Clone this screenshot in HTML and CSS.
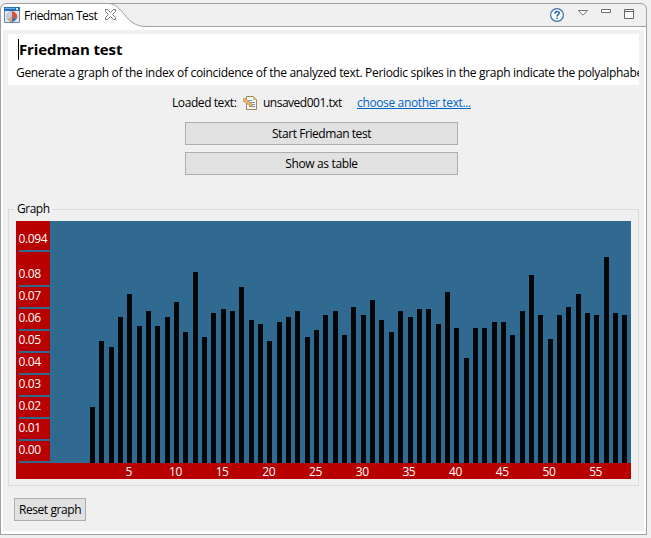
FILE: index.html
```html
<!DOCTYPE html>
<html lang="en">
<head>
<meta charset="utf-8">
<title>Friedman Test</title>
<link rel="stylesheet" href="styles.css">
</head>
<body>
<div class="view">
  <header class="tabbar">
    <svg class="tab-shape" width="647" height="30" viewBox="0 0 647 30">
      <path d="M.5 30V9C.5 6 3 3.500 6 3.500H108C124 3.500 124 26.500 146 26.500H647V30Z" fill="#fff"/>
      <path d="M.5 30V9C.5 6 3 3.500 6 3.500H641C644 3.500 646.500 6 646.500 9V30M108 3.500C124 3.500 124 26.500 146 26.500H646" fill="none" stroke="#a0a0a0"/>
    </svg>
    <svg class="tab-icon" width="16" height="16" viewBox="0 0 16 16">
      <path d="M.5.500h15v15H.5z" fill="#e4e9ee" stroke="#6483a6"/>
      <path d="M0 0h16v4H0z" fill="#286eb4"/><path d="M1 1h10v1H1z" fill="#69aeea"/><path d="M12 1h2v2h-2z" fill="#d8e9f7"/>
      <circle cx="8" cy="9.500" r="5" fill="#e8a860" stroke="#9c9ba6"/>
      <path d="M8 9.500V4.500A5 5 0 0 0 3.700 12z" fill="#c3cfe6"/>
      <path d="M8 9.500V4.500a5 5 0 0 1 4 8z" fill="#d8523b"/>
      <path d="M8 9.500l4 3a5 5 0 0 1-4 2z" fill="#3277bd"/>
    </svg>
    <span class="tab-title">Friedman Test</span>
    <svg class="tab-close" width="11" height="11" viewBox="0 0 11 11"><path d="M.5.500h2l3 3 3-3h2v2l-3 3 3 3v2h-2l-3-3-3 3h-2v-2l3-3-3-3z" fill="#fff" stroke="#777"/></svg>
    <svg class="tools" width="84" height="16" viewBox="0 0 84 16">
      <circle cx="7" cy="8" r="6.400" fill="#fff" stroke="#3671aa" stroke-width="1.200"/>
      <path d="M5 6.600c0-2.800 4.200-2.800 4.200-.5 0 1.600-2.100 1.500-2.100 3.400M7.100 10.400v1.700" fill="none" stroke="#2869aa" stroke-width="1.600"/>
      <path d="M28.300 3.500h9.400l-4.700 4.700z" fill="#fff" stroke="#707070"/>
      <path d="M51.500 2.500h9v3h-9z" fill="#fff" stroke="#707070"/>
      <path d="M74.500 2.500h9v9h-9zM74.500 4.500h9" fill="#fff" stroke="#666"/>
    </svg>
  </header>
  <main class="content">
    <section class="banner">
      <h1 class="title">Friedman test</h1>
      <p class="description">Generate a graph of the index of coincidence of the analyzed text. Periodic spikes in the graph indicate the polyalphabe</p>
    </section>
    <div class="source">
      <span class="source-label">Loaded text:</span>
      <svg class="file-icon" width="14" height="14" viewBox="0 0 14 14">
        <path d="M3.500.500h7l3 3v10h-10z" fill="#f7faff" stroke="#a18a52"/>
        <path d="M10 0v4h4z" fill="#d8bd78"/>
        <path d="M5 4.500h4M7 6.500h5M8 8.500h4M6 10.500h6" stroke="#7894be"/>
        <path d="M0 3l2-1 7 6 1 3-3-1-7-5z" fill="#e9b665" stroke="#b18750" stroke-width=".6"/>
      </svg>
      <span class="file-name">unsaved001.txt</span>
      <a class="choose">choose another text...</a>
    </div>
    <div class="actions">
      <button class="button start">Start Friedman test</button>
      <button class="button">Show as table</button>
    </div>
    <fieldset class="group">
      <legend class="legend">Graph</legend>
      <div class="chart">
        <div class="y-axis">
          <div class="tick first">0.094</div><div class="tick second">0.08</div><div class="tick">0.07</div><div class="tick">0.06</div><div class="tick">0.05</div><div class="tick">0.04</div><div class="tick">0.03</div><div class="tick">0.02</div><div class="tick">0.01</div><div class="tick">0.00</div>
        </div>
        <div class="plot" id="plot"></div>
        <div class="x-axis" id="x-axis"></div>
      </div>
    </fieldset>
    <button class="button reset">Reset graph</button>
  </main>
</div>
<script src="chart.js"></script>
</body>
</html>
```
FILE: styles.css
```css
* { box-sizing: border-box; }
body { margin: 0; background: #f0f0f0; color: #000; font: 12px/16px "Open Sans", "Noto Sans", sans-serif; overflow: hidden; }
.view { width: 647px; height: 535px; border: solid #a0a0a0; border-width: 0 1px 1px; background: #fff; display: flex; flex-direction: column; }
.tabbar { position: relative; display: flex; flex: 0 0 29px; margin: 0 -1px; padding-left: 4px; background: #f0f0f0; }
.tab-shape { position: absolute; left: 0; top: 0; }
.tab-icon, .tab-title, .tab-close, .tools { position: relative; flex: none; }
.tab-icon { margin-top: 7px; }
.tab-title { width: 81px; margin: 8px 0 0 4px; letter-spacing: -.5px; white-space: nowrap; }
.tab-close { margin-top: 9px; }
.tools { margin: 7px 13px 0 auto; }
.content { flex: 1; margin: 0 2px 3px; padding: 5px; background: #f0f0f0; min-height: 0; }
.banner { width: 631px; height: 51px; background: #fff; padding: 5px 0 0 8px; overflow: hidden; }
.title { margin: 0 0 0 2px; width: max-content; border-left: 1px solid #000; font-size: 15px; line-height: 21px; letter-spacing: -.12px; }
.description { margin: 5px 0 0; letter-spacing: -.32px; white-space: nowrap; }
.source { display: flex; height: 16px; margin: 10px 0 0 164px; white-space: nowrap; letter-spacing: -.36px; }
.source-label { width: 71px; letter-spacing: -.42px; }
.file-icon { margin-top: 1px; }
.file-name { margin-left: 6px; width: 94px; letter-spacing: -.5px; }
.choose { color: #0066cc; text-decoration: underline; }
.actions { width: 273px; margin: 11px 0 0 177px; display: grid; gap: 7px; }
.button { height: 23px; padding: 0; border: 1px solid #adadad; background: #e1e1e1; color: #000; font: inherit; letter-spacing: -.36px; }
.start { letter-spacing: -.43px; }
.group { width: 631px; height: 285px; margin: 26px 0 0; padding: 0 7px; border: 1px solid #dcdcdc; }
.legend { height: 16px; margin-left: -1px; padding: 0 2px; letter-spacing: -.5px; }
.chart { width: 615px; height: 258px; margin-top: 4px; display: grid; grid-template: 242px 16px / 34px 581px; background: #b80000; color: #fff; }
.y-axis { padding-left: 3px; letter-spacing: -.4px; }
.tick { height: 22px; border-bottom: 2px solid #316a91; display: flex; align-items: flex-end; padding-bottom: 3px; line-height: 16px; text-indent: -.5px; }
.first { height: 31px; }
.second { height: 35px; }
.plot { display: flex; align-items: flex-end; background: #316a91; }
.bar { width: 5px; flex: none; background: #020609; }
.x-axis { grid-column: 1 / 3; display: flex; padding-left: 89.4px; line-height: 18px; }
.x-label { flex: 0 0 46.7px; text-align: center; letter-spacing: -.4px; }
.reset { display: block; width: 72px; margin: 12px 0 0 6px; letter-spacing: -.42px; }
```
FILE: chart.js
```js
const values = [56,122,116,146,169,137,152,137,146,161,131,191,126,150,154,152,176,143,139,122,141,146,152,126,133,148,152,128,156,148,163,143,131,152,146,154,154,139,171,135,105,135,135,141,141,128,152,188,148,124,148,156,169,150,148,206,150,148];
const plot = document.getElementById('plot');
let edge = 0;
values.forEach((value, index) => {
  const bar = document.createElement('div');
  const left = Math.round(39.95 + index * 9.34);
  bar.className = 'bar';
  bar.style.marginLeft = `${left - edge}px`;
  bar.style.height = `${value}px`;
  edge = left + 5;
  plot.append(bar);
});
const axis = document.getElementById('x-axis');
for (let number = 5; number <= 55; number += 5) {
  const label = document.createElement('span');
  label.className = 'x-label';
  label.textContent = number;
  axis.append(label);
}
```
